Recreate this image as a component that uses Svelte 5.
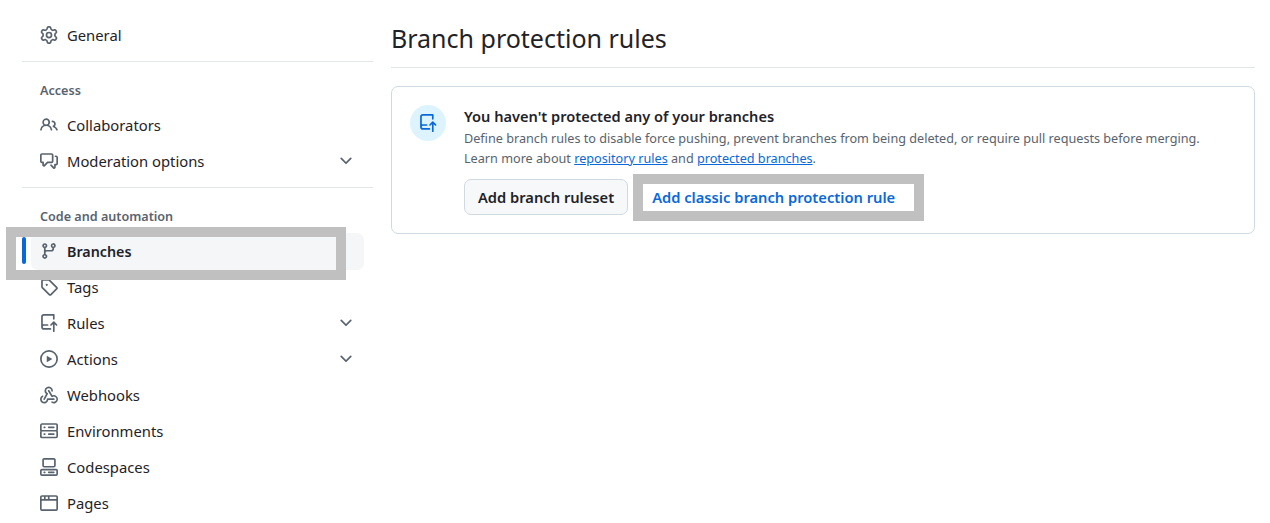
<script>
  const icons = {
    gear: ["M8 0a8.2 8.2 0 0 1 .701.031C9.444.095 9.99.645 10.16 1.29l.288 1.107c.018.066.079.158.212.224.231.114.454.243.668.386.123.082.233.09.299.071l1.103-.303c.644-.176 1.392.021 1.82.63.27.385.506.792.704 1.218.315.675.111 1.422-.364 1.891l-.814.806c-.049.048-.098.147-.088.294.016.257.016.515 0 .772-.01.147.038.246.088.294l.814.806c.475.469.679 1.216.364 1.891a7.977 7.977 0 0 1-.704 1.217c-.428.61-1.176.807-1.82.63l-1.102-.302c-.067-.019-.177-.011-.3.071a5.909 5.909 0 0 1-.668.386c-.133.066-.194.158-.211.224l-.29 1.106c-.168.646-.715 1.196-1.458 1.26a8.006 8.006 0 0 1-1.402 0c-.743-.064-1.289-.614-1.458-1.26l-.289-1.106c-.018-.066-.079-.158-.212-.224a5.738 5.738 0 0 1-.668-.386c-.123-.082-.233-.09-.299-.071l-1.103.303c-.644.176-1.392-.021-1.82-.63a8.12 8.12 0 0 1-.704-1.218c-.315-.675-.111-1.422.363-1.891l.815-.806c.05-.048.098-.147.088-.294a6.214 6.214 0 0 1 0-.772c.01-.147-.038-.246-.088-.294l-.815-.806C.635 6.045.431 5.298.746 4.623a7.92 7.92 0 0 1 .704-1.217c.428-.61 1.176-.807 1.82-.63l1.102.302c.067.019.177.011.3-.071.214-.143.437-.272.668-.386.133-.066.194-.158.211-.224l.29-1.106C6.009.645 6.556.095 7.299.03 7.53.01 7.764 0 8 0Zm-.571 1.525c-.036.003-.108.036-.137.146l-.289 1.105c-.147.561-.549.967-.998 1.189-.173.086-.34.183-.5.29-.417.278-.97.423-1.529.27l-1.103-.303c-.109-.03-.175.016-.195.045-.22.312-.412.644-.573.99-.014.031-.021.11.059.19l.815.806c.411.406.562.957.53 1.456a4.709 4.709 0 0 0 0 .582c.032.499-.119 1.05-.53 1.456l-.815.806c-.081.08-.073.159-.059.19.162.346.353.677.573.989.02.03.085.076.195.046l1.102-.303c.56-.153 1.113-.008 1.53.27.161.107.328.204.501.29.447.222.85.629.997 1.189l.289 1.105c.029.109.101.143.137.146a6.6 6.6 0 0 0 1.142 0c.036-.003.108-.036.137-.146l.289-1.105c.147-.561.549-.967.998-1.189.173-.086.34-.183.5-.29.417-.278.97-.423 1.529-.27l1.103.303c.109.029.175-.016.195-.045.22-.313.411-.644.573-.99.014-.031.021-.11-.059-.19l-.815-.806c-.411-.406-.562-.957-.53-1.456a4.709 4.709 0 0 0 0-.582c-.032-.499.119-1.05.53-1.456l.815-.806c.081-.08.073-.159.059-.19a6.464 6.464 0 0 0-.573-.989c-.02-.03-.085-.076-.195-.046l-1.102.303c-.56.153-1.113.008-1.53-.27a4.44 4.44 0 0 0-.501-.29c-.447-.222-.85-.629-.997-1.189l-.289-1.105c-.029-.11-.101-.143-.137-.146a6.6 6.6 0 0 0-1.142 0ZM11 8a3 3 0 1 1-6 0 3 3 0 0 1 6 0ZM9.5 8a1.5 1.5 0 1 0-3.001.001A1.5 1.5 0 0 0 9.5 8Z"],
    people: ["M2 5.5a3.5 3.5 0 1 1 5.898 2.549 5.508 5.508 0 0 1 3.034 4.084.75.75 0 1 1-1.482.235 4 4 0 0 0-7.9 0 .75.75 0 0 1-1.482-.236A5.507 5.507 0 0 1 3.102 8.05 3.493 3.493 0 0 1 2 5.5ZM11 4a3.001 3.001 0 0 1 2.22 5.018 5.01 5.01 0 0 1 2.56 3.012.749.749 0 0 1-.885.954.752.752 0 0 1-.549-.514 3.507 3.507 0 0 0-2.522-2.372.75.75 0 0 1-.574-.73v-.352a.75.75 0 0 1 .416-.672A1.5 1.5 0 0 0 11 5.5.75.75 0 0 1 11 4Zm-5.5-.5a2 2 0 1 0-.001 3.999A2 2 0 0 0 5.5 3.5Z"],
    discussion: ["M1.75 1h8.5c.966 0 1.75.784 1.75 1.75v5.5A1.75 1.75 0 0 1 10.25 10H7.061l-2.574 2.573A1.458 1.458 0 0 1 2 11.543V10h-.25A1.75 1.75 0 0 1 0 8.25v-5.5C0 1.784.784 1 1.75 1ZM1.5 2.75v5.5c0 .138.112.25.25.25h1a.75.75 0 0 1 .75.75v2.19l2.72-2.72a.749.749 0 0 1 .53-.22h3.5a.25.25 0 0 0 .25-.25v-5.5a.25.25 0 0 0-.25-.25h-8.5a.25.25 0 0 0-.25.25Zm13 2a.25.25 0 0 0-.25-.25h-.5a.75.75 0 0 1 0-1.5h.5c.966 0 1.75.784 1.75 1.75v5.5A1.75 1.75 0 0 1 14.25 12H14v1.543a1.458 1.458 0 0 1-2.487 1.03L9.22 12.28a.749.749 0 0 1 .326-1.275.749.749 0 0 1 .734.215l2.22 2.22v-2.19a.75.75 0 0 1 .75-.75h1a.25.25 0 0 0 .25-.25Z"],
    branch: ["M9.5 3.25a2.25 2.25 0 1 1 3 2.122V6A2.5 2.5 0 0 1 10 8.5H6a1 1 0 0 0-1 1v1.128a2.251 2.251 0 1 1-1.5 0V5.372a2.25 2.25 0 1 1 1.5 0v1.836A2.493 2.493 0 0 1 6 7h4a1 1 0 0 0 1-1v-.628A2.25 2.25 0 0 1 9.5 3.25Zm-6 0a.75.75 0 1 0 1.5 0 .75.75 0 0 0-1.5 0Zm8.25-.75a.75.75 0 1 0 0 1.5.75.75 0 0 0 0-1.5ZM4.25 12a.75.75 0 1 0 0 1.5.75.75 0 0 0 0-1.5Z"],
    tag: ["M1 7.775V2.75C1 1.784 1.784 1 2.75 1h5.025c.464 0 .91.184 1.238.513l6.25 6.25a1.75 1.75 0 0 1 0 2.474l-5.026 5.026a1.75 1.75 0 0 1-2.474 0l-6.25-6.25A1.752 1.752 0 0 1 1 7.775Zm1.5 0c0 .066.026.13.073.177l6.25 6.25a.25.25 0 0 0 .354 0l5.025-5.025a.25.25 0 0 0 0-.354l-6.25-6.25a.25.25 0 0 0-.177-.073H2.75a.25.25 0 0 0-.25.25ZM6 5a1 1 0 1 1 0 2 1 1 0 0 1 0-2Z"],
    rules: ["M1 2.5A2.5 2.5 0 0 1 3.5 0h8.75a.75.75 0 0 1 .75.75v3.5a.75.75 0 0 1-1.5 0V1.5h-8a1 1 0 0 0-1 1v6.708A2.493 2.493 0 0 1 3.5 9h3.25a.75.75 0 0 1 0 1.5H3.5a1 1 0 0 0 0 2h5.75a.75.75 0 0 1 0 1.5H3.5A2.5 2.5 0 0 1 1 11.5Zm13.23 7.79h-.001l-1.224-1.224v6.184a.75.75 0 0 1-1.5 0V9.066L10.28 10.29a.75.75 0 0 1-1.06-1.061l2.505-2.504a.75.75 0 0 1 1.06 0L15.29 9.23a.751.751 0 0 1-.018 1.042.751.751 0 0 1-1.042.018Z"],
    play: ["M8 0a8 8 0 1 1 0 16A8 8 0 0 1 8 0ZM1.5 8a6.5 6.5 0 1 0 13 0 6.5 6.5 0 0 0-13 0Zm4.879-2.773 4.264 2.559a.25.25 0 0 1 0 .428l-4.264 2.559A.25.25 0 0 1 6 10.559V5.442a.25.25 0 0 1 .379-.215Z"],
    webhook: ["M5.5 4.25a2.25 2.25 0 0 1 4.5 0 .75.75 0 0 0 1.5 0 3.75 3.75 0 1 0-6.14 2.889l-2.272 4.258a.75.75 0 0 0 1.324.706L7 7.25a.75.75 0 0 0-.309-1.015A2.25 2.25 0 0 1 5.5 4.25Z", "M7.364 3.607a.75.75 0 0 1 1.03.257l2.608 4.349a3.75 3.75 0 1 1-.628 6.785.75.75 0 0 1 .752-1.299 2.25 2.25 0 1 0-.033-3.88.75.75 0 0 1-1.03-.256L7.107 4.636a.75.75 0 0 1 .257-1.03Z", "M2.9 8.776A.75.75 0 0 1 2.625 9.8 2.25 2.25 0 1 0 6 11.75a.75.75 0 0 1 .75-.751h5.5a.75.75 0 0 1 0 1.5H7.425a3.751 3.751 0 1 1-5.55-3.998.75.75 0 0 1 1.024.274Z"],
    server: ["M1.75 1h12.5c.966 0 1.75.784 1.75 1.75v4c0 .372-.116.717-.314 1 .198.283.314.628.314 1v4a1.75 1.75 0 0 1-1.75 1.75H1.75A1.75 1.75 0 0 1 0 13.25v-4c0-.372.116-.717.314-1a1.739 1.739 0 0 1-.314-1v-4C0 1.784.784 1 1.75 1ZM1.5 2.75v4c0 .138.112.25.25.25h12.5a.25.25 0 0 0 .25-.25v-4a.25.25 0 0 0-.25-.25H1.75a.25.25 0 0 0-.25.25Zm.25 5.75a.25.25 0 0 0-.25.25v4c0 .138.112.25.25.25h12.5a.25.25 0 0 0 .25-.25v-4a.25.25 0 0 0-.25-.25ZM7 4.75A.75.75 0 0 1 7.75 4h4.5a.75.75 0 0 1 0 1.5h-4.5A.75.75 0 0 1 7 4.75ZM7.75 10h4.5a.75.75 0 0 1 0 1.5h-4.5a.75.75 0 0 1 0-1.5ZM3 4.75A.75.75 0 0 1 3.75 4h.5a.75.75 0 0 1 0 1.5h-.5A.75.75 0 0 1 3 4.75ZM3.75 10h.5a.75.75 0 0 1 0 1.5h-.5a.75.75 0 0 1 0-1.5Z"],
    codespaces: ["M0 11.25c0-.966.784-1.75 1.75-1.75h12.5c.966 0 1.75.784 1.75 1.75v3A1.75 1.75 0 0 1 14.25 16H1.75A1.75 1.75 0 0 1 0 14.25Zm2-9.5C2 .784 2.784 0 3.75 0h8.5C13.216 0 14 .784 14 1.75v5a1.75 1.75 0 0 1-1.75 1.75h-8.5A1.75 1.75 0 0 1 2 6.75Zm1.75-.25a.25.25 0 0 0-.25.25v5c0 .138.112.25.25.25h8.5a.25.25 0 0 0 .25-.25v-5a.25.25 0 0 0-.25-.25Zm-2 9.5a.25.25 0 0 0-.25.25v3c0 .138.112.25.25.25h12.5a.25.25 0 0 0 .25-.25v-3a.25.25 0 0 0-.25-.25Z", "M7 12.75a.75.75 0 0 1 .75-.75h4.5a.75.75 0 0 1 0 1.5h-4.5a.75.75 0 0 1-.75-.75Zm-4 0a.75.75 0 0 1 .75-.75h.5a.75.75 0 0 1 0 1.5h-.5a.75.75 0 0 1-.75-.75Z"],
    browser: ["M0 2.75C0 1.784.784 1 1.75 1h12.5c.966 0 1.75.784 1.75 1.75v10.5A1.75 1.75 0 0 1 14.25 15H1.75A1.75 1.75 0 0 1 0 13.25ZM14.5 6h-13v7.25c0 .138.112.25.25.25h12.5a.25.25 0 0 0 .25-.25Zm-6-3.5v2h6V2.75a.25.25 0 0 0-.25-.25ZM5 2.5v2h2v-2Zm-3.25 0a.25.25 0 0 0-.25.25V4.5h2v-2Z"]
  };
  const chevron = "M12.78 5.22a.749.749 0 0 1 0 1.06l-4.25 4.25a.749.749 0 0 1-1.06 0L3.22 6.28a.749.749 0 1 1 1.06-1.06L8 8.939l3.72-3.719a.749.749 0 0 1 1.06 0Z";

  const groups = [
    { items: [{ icon: "gear", label: "General" }] },
    { heading: "Access", items: [
      { icon: "people", label: "Collaborators" },
      { icon: "discussion", label: "Moderation options", more: true }
    ] },
    { heading: "Code and automation", items: [
      { icon: "branch", label: "Branches", current: true },
      { icon: "tag", label: "Tags" },
      { icon: "rules", label: "Rules", more: true },
      { icon: "play", label: "Actions", more: true },
      { icon: "webhook", label: "Webhooks" },
      { icon: "server", label: "Environments" },
      { icon: "codespaces", label: "Codespaces" },
      { icon: "browser", label: "Pages" }
    ] }
  ];
</script>

<div class="page">
  <nav class="side">
    {#each groups as group, i}
      {#if i > 0}<div class="sep"></div>{/if}
      {#if group.heading}<div class="head">{group.heading}</div>{/if}
      {#each group.items as item}
        <div class="row" class:current={item.current}>
          {#if item.current}<span class="bar"></span><span class="mark side-mark"></span>{/if}
          <svg class="ico" viewBox="0 0 16 16" width="18" height="18">
            {#each icons[item.icon] as d}<path {d} />{/each}
          </svg>
          <span class="label">{item.label}</span>
          {#if item.more}
            <svg class="chev" viewBox="0 0 16 16" width="18" height="18"><path d={chevron} /></svg>
          {/if}
        </div>
      {/each}
    {/each}
  </nav>

  <main class="main">
    <h1 class="title">Branch protection rules</h1>
    <section class="box">
      <div class="circle">
        <svg class="ico blue" viewBox="0 0 16 16" width="18" height="18">
          {#each icons.rules as d}<path {d} />{/each}
        </svg>
      </div>
      <div class="body">
        <h2 class="box-title">You haven't protected any of your branches</h2>
        <p class="desc">Define branch rules to disable force pushing, prevent branches from being deleted, or require pull requests before merging.</p>
        <p class="desc">Learn more about <a href="#r">repository rules</a> and <a href="#p">protected branches</a>.</p>
        <div class="actions">
          <button class="btn">Add branch ruleset</button>
          <div class="link-wrap">
            <span class="mark link-mark"></span>
            <button class="btn-link">Add classic branch protection rule</button>
          </div>
        </div>
      </div>
    </section>
  </main>
</div>

<style>
  :global(body) {
    margin: 0;
    background: #fff;
  }
  .page {
    display: flex;
    height: 523px;
    overflow: hidden;
    box-sizing: border-box;
    padding: 17px 15px 0 22px;
    font-family: "Noto Sans", "Open Sans", sans-serif;
    color: #1f2328;
    font-size: 14.8px;
  }
  .side {
    width: 351px;
    flex: none;
  }
  .sep {
    height: 1px;
    background: #e3e6e9;
    margin: 8px 0 0;
  }
  .head {
    height: 45px;
    box-sizing: border-box;
    padding: 20px 0 0 18px;
    font-size: 12.6px;
    line-height: 18px;
    font-weight: 600;
    color: #59636e;
  }
  .row {
    position: relative;
    display: flex;
    align-items: center;
    height: 36px;
    margin: 0 9px;
    padding: 0 9px;
    gap: 9px;
    border-radius: 7px;
    width: 333px;
    box-sizing: border-box;
  }
  .row.current {
    height: 37px;
    margin-bottom: -1px;
    padding-bottom: 1px;
    background: #f5f6f8;
    font-weight: 600;
    font-size: 14.3px;
  }
  .bar {
    position: absolute;
    left: -9px;
    top: 4px;
    width: 4px;
    height: 27px;
    border-radius: 3px;
    background: #0969da;
  }
  .mark {
    position: absolute;
    border: 10px solid #c0c0c0;
    box-sizing: border-box;
    pointer-events: none;
    z-index: 1;
  }
  .side-mark {
    left: -25px;
    top: -6px;
    right: 18px;
    bottom: -10px;
  }
  .ico {
    flex: none;
    fill: #59636e;
  }
  .ico.blue {
    fill: #0969da;
  }
  .label {
    flex: 1;
  }
  .chev {
    flex: none;
    fill: #59636e;
  }
  .main {
    flex: 1;
    margin-left: 18px;
    min-width: 0;
  }
  .title {
    margin: 0;
    height: 50px;
    border-bottom: 1px solid #e3e6e9;
    font-size: 25px;
    line-height: 42px;
    font-weight: 400;
  }
  .box {
    display: flex;
    gap: 18px;
    margin-top: 18px;
    height: 148px;
    box-sizing: border-box;
    padding: 18px;
    border: 1px solid #d1d9e0;
    border-radius: 7px;
  }
  .circle {
    width: 36px;
    height: 36px;
    flex: none;
    border-radius: 50%;
    background: #ddf4ff;
    display: flex;
    align-items: center;
    justify-content: center;
  }
  .body {
    flex: 1;
    min-width: 0;
  }
  .box-title {
    margin: 0 0 2px;
    font-size: 14.6px;
    line-height: 22px;
    font-weight: 600;
  }
  .desc {
    margin: 0;
    font-size: 12.65px;
    line-height: 19.5px;
    color: #59636e;
  }
  .desc a {
    color: #0969da;
  }
  .actions {
    display: flex;
    align-items: center;
    gap: 10px;
    margin-top: 11px;
  }
  .btn {
    height: 36px;
    padding: 0 13px;
    border: 1px solid #d1d9e0;
    border-radius: 7px;
    background: #f6f8fa;
    color: #1f2328;
    font: 600 14.7px "Noto Sans", "Open Sans", sans-serif;
  }
  .link-wrap {
    position: relative;
  }
  .btn-link {
    display: block;
    height: 36px;
    padding: 0 24px 0 14px;
    border: 0;
    background: none;
    color: #0969da;
    font: 600 14.7px "Noto Sans", "Open Sans", sans-serif;
  }
  .link-mark {
    left: -5px;
    top: -5px;
    right: -5px;
    bottom: -6px;
  }
</style>
